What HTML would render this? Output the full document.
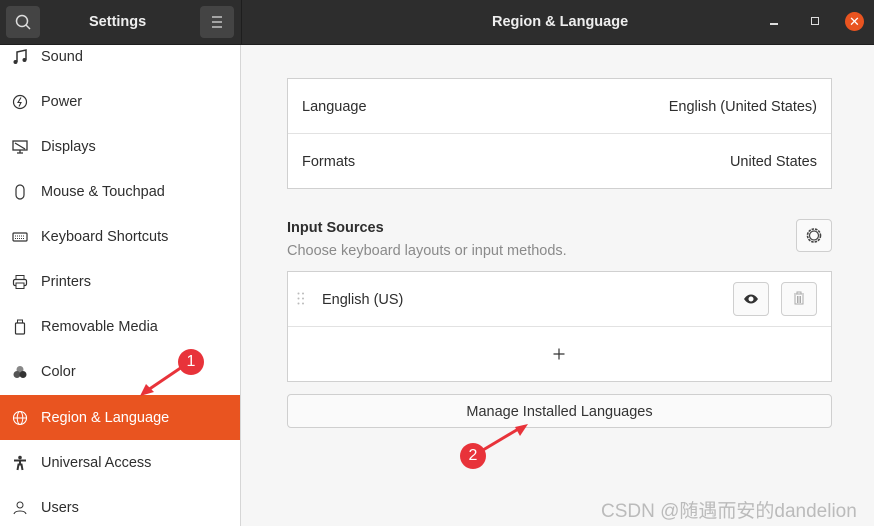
<!DOCTYPE html>
<html><head><meta charset="utf-8"><style>
*{margin:0;padding:0;box-sizing:border-box}
body{width:874px;height:526px;overflow:hidden;background:#f6f6f6;font-family:"Liberation Sans","DejaVu Sans",sans-serif;font-size:14.5px;color:#2e2e2e;position:relative}
.hdr{position:absolute;left:0;top:0;width:874px;height:45px;background:#2d2d2d;border-bottom:1px solid #1e1e1e}
.hb{position:absolute;top:6px;width:34px;height:32px;background:#444;border-radius:4px}
.ttl{position:absolute;top:14px;color:#eee;font-weight:bold;font-size:14.5px}
.side{position:absolute;left:0;top:45px;width:241px;height:481px;background:#fff;border-right:1px solid #d6d6d6;overflow:hidden}
.it{position:absolute;left:0;width:241px;height:45px;line-height:47px;padding-left:41px}
.it svg{position:absolute;left:12px;top:15px}
.act{background:#e95420;color:#fff}
.box{position:absolute;left:287px;width:545px;background:#fff;border:1px solid #d0d0d0}
.row{position:absolute;left:0;width:100%;height:55px;line-height:57px;padding:0 14px}
.r{position:absolute;right:14px;top:0}
.btn{position:absolute;background:#fafafa;border:1px solid #cfcfcf;border-radius:4px}
.badge{position:absolute;width:26px;height:26px;border-radius:50%;background:#e8333a;color:#fff;font-size:16px;text-align:center;line-height:26px}
</style></head><body>
<div class="hdr">
 <div class="hb" style="left:6px"><svg width="34" height="32"><circle cx="16" cy="15" r="5.5" fill="none" stroke="#ddd" stroke-width="1.5"/><line x1="20" y1="19" x2="24" y2="23" stroke="#ddd" stroke-width="1.5"/></svg></div>
 <div class="ttl" style="left:89px">Settings</div>
 <div class="hb" style="left:200px"><svg width="34" height="32"><path d="M12 11h10M12 16h10M12 21h10" stroke="#ddd" stroke-width="1.3"/></svg></div>
 <div style="position:absolute;left:241px;top:0;width:1px;height:45px;background:#1e1e1e"></div>
 <div class="ttl" style="left:492px">Region &amp; Language</div>
 <div style="position:absolute;left:770px;top:23px;width:8px;height:1.5px;background:#ddd"></div>
 <div style="position:absolute;left:811px;top:17px;width:8px;height:8px;border:1.5px solid #ddd"></div>
 <div style="position:absolute;left:845px;top:12px;width:19px;height:19px;border-radius:50%;background:#e95420;color:#fff;text-align:center;line-height:19px;font-size:13px">✕</div>
</div>
<div class="side">
 <div class="it" style="top:-11px"><svg width="16" height="16"><path d="M5 13V3l9-2v10" fill="none" stroke="#333" stroke-width="1.5"/><circle cx="3.5" cy="13" r="2" fill="#333"/><circle cx="12.5" cy="11" r="2" fill="#333"/></svg>Sound</div>
 <div class="it" style="top:34px"><svg width="16" height="16"><circle cx="8" cy="8" r="6.5" fill="none" stroke="#333" stroke-width="1.2"/><path d="M9 3.5L6 8.5h3l-2 4" fill="none" stroke="#333" stroke-width="1.1"/></svg>Power</div>
 <div class="it" style="top:79px"><svg width="16" height="16"><rect x="1" y="2" width="14" height="9" fill="none" stroke="#333" stroke-width="1.3"/><path d="M3 4l10 6M5 14h6M8 11v3" stroke="#333" stroke-width="1.3"/></svg>Displays</div>
 <div class="it" style="top:124px"><svg width="16" height="16"><rect x="4" y="1" width="8" height="14" rx="4" fill="none" stroke="#333" stroke-width="1.2"/></svg>Mouse &amp; Touchpad</div>
 <div class="it" style="top:169px"><svg width="16" height="16"><rect x="1" y="4" width="14" height="8" rx="1" fill="none" stroke="#333" stroke-width="1.2"/><path d="M3 7h10M3 9.5h10" stroke="#333" stroke-width="1" stroke-dasharray="1 1"/></svg>Keyboard Shortcuts</div>
 <div class="it" style="top:214px"><svg width="16" height="16"><rect x="4" y="1.5" width="8" height="4" fill="none" stroke="#333"/><rect x="1.5" y="5.5" width="13" height="6" rx="1.5" fill="none" stroke="#333" stroke-width="1.2"/><rect x="4" y="9" width="8" height="5.5" fill="#fff" stroke="#333"/></svg>Printers</div>
 <div class="it" style="top:259px"><svg width="16" height="16"><rect x="5.5" y="1" width="5" height="3" fill="none" stroke="#333"/><rect x="3.5" y="4" width="9" height="11" rx="1" fill="none" stroke="#333" stroke-width="1.2"/></svg>Removable Media</div>
 <div class="it" style="top:304px"><svg width="16" height="16"><circle cx="8" cy="5.5" r="3.5" fill="#888"/><circle cx="5" cy="10.5" r="3.5" fill="#555"/><circle cx="11" cy="10.5" r="3.5" fill="#333"/></svg>Color</div>
 <div class="it act" style="top:350px"><svg width="16" height="16"><circle cx="8" cy="8" r="6.5" fill="none" stroke="#fff" stroke-width="1.1"/><ellipse cx="8" cy="8" rx="2.8" ry="6.5" fill="none" stroke="#fff"/><path d="M1.5 8h13" stroke="#fff"/></svg>Region &amp; Language</div>
 <div class="it" style="top:395px"><svg width="16" height="16"><circle cx="8" cy="2.5" r="1.8" fill="#333"/><path d="M2 5.5h12M8 5.5v4M5.5 15l1-5.5h3l1 5.5" stroke="#333" stroke-width="2" fill="none"/></svg>Universal Access</div>
 <div class="it" style="top:440px"><svg width="16" height="16"><circle cx="8" cy="5" r="3" fill="none" stroke="#333"/><path d="M2 14c1-4 11-4 12 0" fill="none" stroke="#333"/></svg>Users</div>
</div>
<div class="box" style="top:78px;height:111px">
 <div class="row" style="top:0;border-bottom:1px solid #e2e2e2">Language<span class="r">English (United States)</span></div>
 <div class="row" style="top:55px">Formats<span class="r">United States</span></div>
</div>
<div style="position:absolute;left:287px;top:220px;font-weight:bold">Input Sources</div>
<div style="position:absolute;left:287px;top:243px;color:#8a8a8a">Choose keyboard layouts or input methods.</div>
<div class="btn" style="left:796px;top:219px;width:36px;height:33px"><svg width="34" height="31"><circle cx="17" cy="15.5" r="6.5" fill="none" stroke="#444" stroke-width="1.6" stroke-dasharray="2.5 1"/><circle cx="17" cy="15.5" r="4.5" fill="none" stroke="#444" stroke-width="1.2"/></svg></div>
<div class="box" style="top:271px;height:111px">
 <div class="row" style="top:0;border-bottom:1px solid #e2e2e2;padding-left:34px">English (US)</div>
 <svg style="position:absolute;left:9px;top:20px" width="8" height="14"><g fill="#bbb"><circle cx="1.5" cy="1.5" r="1"/><circle cx="6" cy="1.5" r="1"/><circle cx="1.5" cy="6.5" r="1"/><circle cx="6" cy="6.5" r="1"/><circle cx="1.5" cy="11.5" r="1"/><circle cx="6" cy="11.5" r="1"/></g></svg>
 <div class="btn" style="left:445px;top:10px;width:36px;height:34px"><svg width="34" height="32"><path d="M10 16c4-6 10-6 14 0c-4 6-10 6-14 0z" fill="#333"/><circle cx="17" cy="16" r="2.5" fill="#fff"/></svg></div>
 <div class="btn" style="left:493px;top:10px;width:36px;height:34px"><svg width="34" height="32"><path d="M12 11h10M15 11v-2h4v2M13 12v9h8v-9M15.5 13v7M17 13v7M18.5 13v7" fill="none" stroke="#aaa" stroke-width="1"/></svg></div>
 <svg style="position:absolute;left:265px;top:76px" width="12" height="12"><path d="M6 0.5v11M0.5 6h11" stroke="#333" stroke-width="1.2"/></svg>
</div>
<div class="btn" style="left:287px;top:394px;width:545px;height:34px;text-align:center;line-height:34px;color:#333">Manage Installed Languages</div>
<svg style="position:absolute;left:0;top:0" width="874" height="526"><path d="M182 367L148 390" stroke="#e8333a" stroke-width="3"/><path d="M140 396l6-12 8 8z" fill="#e8333a"/><path d="M478 453L520 428" stroke="#e8333a" stroke-width="3"/><path d="M528 424l-8 12-5-9z" fill="#e8333a"/></svg>
<div class="badge" style="left:178px;top:349px">1</div>
<div class="badge" style="left:460px;top:443px">2</div>
<div style="position:absolute;left:601px;top:496px;font-size:19px;color:#bbb;font-family:'Liberation Sans','Noto Sans CJK SC',sans-serif">CSDN @随遇而安的dandelion</div>
</body></html>
